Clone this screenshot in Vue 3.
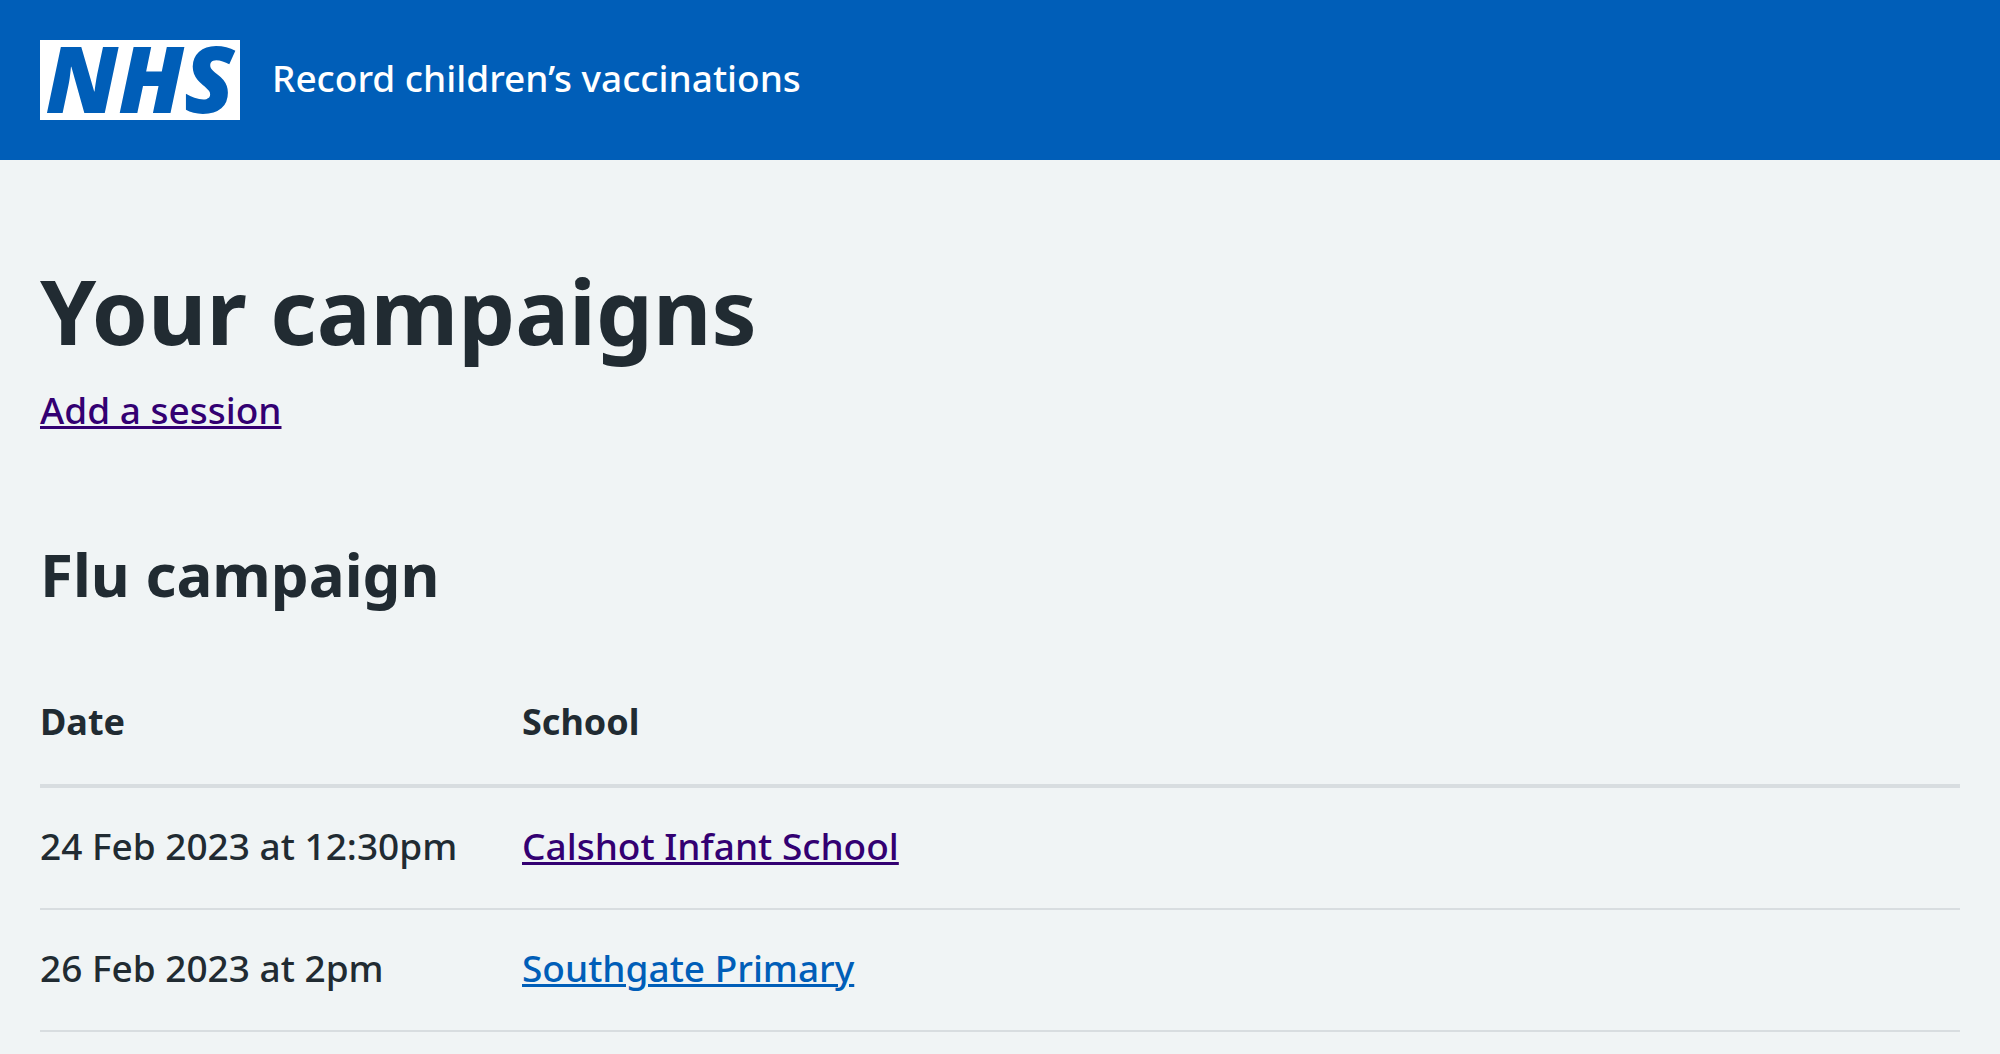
<script setup>
const sessions = [
  { date: '24 Feb 2023 at 12:30pm', school: 'Calshot Infant School', visited: true },
  { date: '26 Feb 2023 at 2pm', school: 'Southgate Primary', visited: false },
]
</script>

<template>
  <div class="page">
    <header class="header">
      <a class="logo" href="#" aria-label="NHS homepage">NHS</a>
      <span class="service">Record children’s vaccinations</span>
    </header>

    <main class="main">
      <h1>Your campaigns</h1>
      <p><a class="link visited" href="#">Add a session</a></p>

      <h2>Flu campaign</h2>
      <table>
        <thead>
          <tr>
            <th class="date" scope="col">Date</th>
            <th scope="col">School</th>
          </tr>
        </thead>
        <tbody>
          <tr v-for="session in sessions" :key="session.date">
            <td>{{ session.date }}</td>
            <td><a class="link" :class="{ visited: session.visited }" href="#">{{ session.school }}</a></td>
          </tr>
        </tbody>
      </table>
    </main>
  </div>
</template>

<style>
body {
  margin: 0;
  background: #f0f4f5;
}
</style>

<style scoped>
.page {
  color: #212b32;
  font-family: "Noto Sans", "Open Sans", sans-serif;
  font-size: 37px;
  font-weight: 500;
  line-height: 56px;
}

.header {
  display: flex;
  align-items: center;
  gap: 32px;
  padding: 40px;
  background: #005eb8;
  color: #fff;
}

.service {
  padding-bottom: 4px;
}

.logo {
  width: 200px;
  height: 80px;
  background: #fff;
  color: #005eb8;
  font-size: 92px;
  font-style: italic;
  font-weight: 900;
  line-height: 76px;
  text-align: center;
  text-decoration: none;
}

.main {
  padding: 98px 40px 20px;
}

h1 {
  margin: 0 0 20px;
  font-size: 90px;
  font-weight: 700;
  line-height: 104px;
}

p {
  margin: 0 0 98px;
}

h2 {
  margin: 0 0 52px;
  font-size: 60px;
  font-weight: 700;
  line-height: 76px;
}

.link {
  color: #005eb8;
  text-decoration: underline;
  text-decoration-thickness: 3px;
  text-underline-offset: 2px;
}

.link.visited {
  color: #330072;
}

table {
  width: 100%;
  border-collapse: separate;
  border-spacing: 0;
}

th,
td {
  padding: 30px 32px 34px 0;
  border-bottom: 2px solid #d8dde0;
  font-weight: 500;
  text-align: left;
}

th {
  border-bottom-width: 4px;
  font-size: 36px;
  font-weight: 700;
}

.date {
  width: 450px;
}
</style>
